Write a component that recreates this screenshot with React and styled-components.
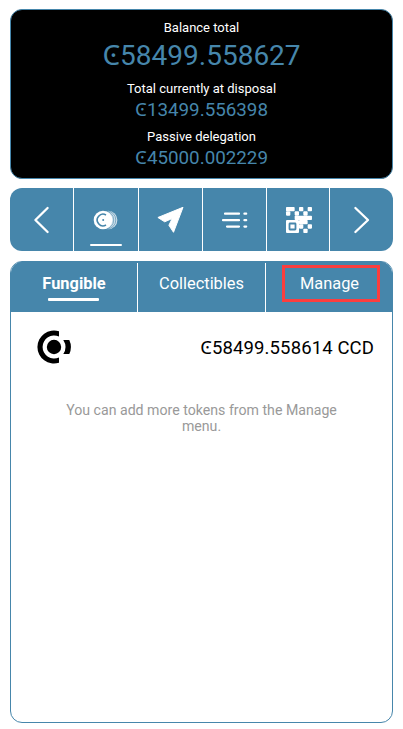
import React from "react";
import styled, { createGlobalStyle } from "styled-components";

const blue = "#4686ab";

const GlobalStyle = createGlobalStyle`
  * { box-sizing: border-box; }
  body { margin: 0; background: #fff; font-family: Roboto, "Noto Sans", sans-serif; }
`;

const Screen = styled.main`
  display: flex;
  flex-direction: column;
  width: 403px;
  height: 729px;
  padding: 9px 10px 6px;
`;

const BalanceCard = styled.section`
  display: flex;
  flex-direction: column;
  align-items: center;
  height: 170px;
  padding-top: 10px;
  border: 1px solid ${blue};
  border-radius: 12px;
  background: #000;
  white-space: nowrap;
`;

const Label = styled.div`
  height: 18px;
  color: #fff;
  font-size: 13px;
  line-height: 16px;
`;

const Amount = styled.div`
  height: ${(p) => (p.$large ? 43 : 30)}px;
  color: ${blue};
  font-size: ${(p) => (p.$large ? 28 : 18.8)}px;
  line-height: ${(p) => (p.$large ? 36 : 23)}px;
`;

const ActionBar = styled.nav`
  display: grid;
  grid-template-columns: 63px 64px 63px 63px 62px 1fr;
  gap: 1px;
  height: 63px;
  margin-top: 9px;
  border-radius: 12px;
  overflow: hidden;
`;

const Action = styled.button`
  display: flex;
  flex-direction: column;
  align-items: center;
  padding: 0;
  border: 0;
  background: ${blue};
`;

const ActiveLine = styled.span`
  width: 32px;
  height: 2px;
  margin-top: -7.5px;
  border-radius: 1px;
  background: #fff;
`;

const Panel = styled.section`
  height: 462px;
  margin-top: 10px;
  border: 1px solid ${blue};
  border-radius: 12px;
  overflow: hidden;
`;

const Tabs = styled.div`
  display: grid;
  grid-template-columns: 126px 127px 1fr;
  gap: 1px;
  height: 50px;
  background: linear-gradient(${blue} 1px, #fff 1px);
`;

const Tab = styled.button`
  display: flex;
  flex-direction: column;
  align-items: center;
  padding: ${(p) => (p.$marked ? "3px 0 0 3px" : "11px 0 0")};
  border: 0;
  background: ${blue};
  color: #fff;
  font-family: inherit;
  font-size: 16.4px;
  font-weight: ${(p) => (p.$active ? 700 : 400)};
  line-height: 21px;
`;

const TabLine = styled.span`
  width: 51px;
  height: 3px;
  margin: 4px 2px 0 0;
  border-radius: 1px;
  background: #fff;
`;

const Highlight = styled.span`
  width: 98px;
  height: 37px;
  padding: 5px 2px 0 0;
  border: 3px solid #fb3e3e;
`;

const TokenRow = styled.div`
  display: flex;
  align-items: center;
  justify-content: space-between;
  height: 70px;
  padding: 0 18px 0 26px;
  color: #000;
  font-size: 18.5px;
  letter-spacing: 0.12px;
`;

const TokenBalance = styled.span`
  padding-bottom: 2px;
`;

const Hint = styled.p`
  width: 280px;
  margin: 20px auto 0;
  color: #999;
  font-size: 14.15px;
  line-height: 16px;
  text-align: center;
`;

const Icon = styled.svg`
  display: block;
  flex: none;
`;

const Chevron = ({ d }) => (
  <Icon width="63" height="63" fill="none" stroke="#fff" strokeWidth="2.3" strokeLinecap="round" strokeLinejoin="round">
    <path d={d} />
  </Icon>
);

const CoinsIcon = () => (
  <Icon width="64" height="63" fill="none">
    <circle cx="34.2" cy="32" r="9.2" fill="#cfe0ea" />
    <path d="M30.5 22.8a9.2 9.2 0 0 1 0 18.4M32.6 22.8a9.2 9.2 0 0 1 0 18.4" stroke={blue} strokeWidth=".6" />
    <circle cx="29" cy="32" r="9.3" fill="#fff" />
    <path d="M32 27a5.8 5.8 0 1 0 0 10" stroke={blue} strokeWidth="1.6" />
    <circle cx="29.2" cy="32" r="1" fill={blue} />
  </Icon>
);

const SendIcon = () => (
  <Icon width="63" height="63" fill="#fff" stroke="#fff" strokeWidth="1" strokeLinejoin="round">
    <path d="M44 19.3 18.9 29.5 25.7 33.8 33.2 30.5 29.9 37.3 34.5 44.3Z" />
  </Icon>
);

const ListIcon = () => (
  <Icon width="63" height="63" stroke="#fff" strokeWidth="2.2" strokeLinecap="round">
    <path d="M22 25.7h14M20 32.2h16M24 38.6h12M41.4 25.7h1.8M41.4 32.2h1.8M41.4 38.6h1.8" />
  </Icon>
);

const qrCells = [
  [0, 0, 2], [3, 0, 1], [5, 0, 1],
  [0, 1, 1], [2, 1, 1], [4, 1, 1],
  [2, 2, 4],
  [3, 3, 2],
  [3, 4, 1], [5, 4, 1],
  [4, 5, 1],
];

const QrIcon = () => (
  <Icon width="62" height="63" fill="#fff">
    {qrCells.map(([x, y, w]) => (
      <rect key={`${x}-${y}`} x={19 + x * 4.33} y={19 + y * 4.33} width={w * 4.33} height="4.33" rx=".8" />
    ))}
    <rect x="19" y="32" width="13" height="13" rx="1" />
    <rect x="22.5" y="35.5" width="6" height="6" rx=".5" fill="none" stroke={blue} strokeWidth="1.8" />
  </Icon>
);

const TokenLogo = () => (
  <Icon width="36" height="34" fill="#000">
    <path d="M22 1.3A16.5 16.5 0 1 0 22 32.7V27.4A11.5 11.5 0 1 1 22 6.6Z" />
    <circle cx="17" cy="17" r="7.2" />
    <path d="M26.3 10H32.3a16.5 16.5 0 0 1 0 14H26.3a13 13 0 0 0 0-14Z" />
  </Icon>
);

export default function App() {
  return (
    <Screen>
      <GlobalStyle />
      <BalanceCard>
        <Label>Balance total</Label>
        <Amount $large>Ͼ58499.558627</Amount>
        <Label>Total currently at disposal</Label>
        <Amount>Ͼ13499.556398</Amount>
        <Label>Passive delegation</Label>
        <Amount>Ͼ45000.002229</Amount>
      </BalanceCard>
      <ActionBar>
        <Action aria-label="Previous"><Chevron d="M37.6 20 25.4 32l12.2 12" /></Action>
        <Action aria-label="Tokens"><CoinsIcon /><ActiveLine /></Action>
        <Action aria-label="Send"><SendIcon /></Action>
        <Action aria-label="Activity"><ListIcon /></Action>
        <Action aria-label="Receive"><QrIcon /></Action>
        <Action aria-label="Next"><Chevron d="M25.4 20 38 32 25.4 44" /></Action>
      </ActionBar>
      <Panel>
        <Tabs>
          <Tab $active>Fungible<TabLine /></Tab>
          <Tab>Collectibles</Tab>
          <Tab $marked><Highlight>Manage</Highlight></Tab>
        </Tabs>
        <TokenRow><TokenLogo /><TokenBalance>Ͼ58499.558614 CCD</TokenBalance></TokenRow>
        <Hint>You can add more tokens from the Manage menu.</Hint>
      </Panel>
    </Screen>
  );
}
